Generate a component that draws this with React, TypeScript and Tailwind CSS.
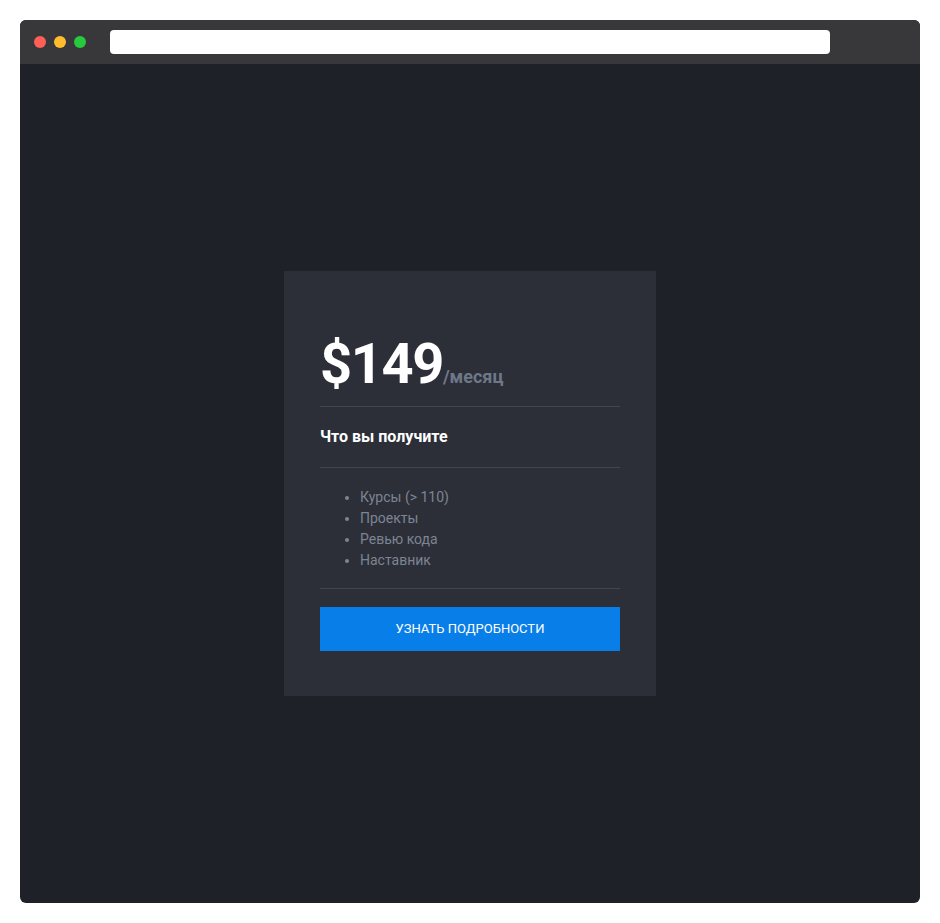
export default function App() {
  const features = ['Курсы (> 110)', 'Проекты', 'Ревью кода', 'Наставник']

  return (
    <div className="min-h-[923px] bg-white p-5 font-['Roboto',sans-serif]">
      <div className="flex h-[883px] flex-col overflow-hidden rounded-md bg-[#1f2129]">
        {/* Browser chrome */}
        <div className="flex h-11 shrink-0 items-center bg-[#38383a] pl-[14px]">
          <div className="flex gap-2">
            <span className="h-3 w-3 rounded-full bg-[#ff5f56]" />
            <span className="h-3 w-3 rounded-full bg-[#ffbd2e]" />
            <span className="h-3 w-3 rounded-full bg-[#27c93f]" />
          </div>
          <div className="ml-6 h-6 w-[720px] rounded bg-white" />
        </div>

        {/* Page */}
        <div className="flex flex-1 items-start justify-center pt-[207px]">
          <div className="w-[372px] bg-[#2c2f38] px-9 pb-[45px] pt-[65px]">
            <div className="flex items-baseline pb-[14px]">
              <span className="text-[56px] font-bold leading-none tracking-tight text-white">$149</span>
              <span className="text-lg font-bold text-[#6f7889]">/месяц</span>
            </div>
            <div className="border-t border-[#41454f] py-5">
              <h3 className="text-base font-bold leading-5 text-white">Что вы получите</h3>
            </div>
            <div className="border-t border-[#41454f] pb-[17px] pt-[19px]">
              <ul className="list-disc pl-10 text-sm leading-[21px] text-[#7d8493]">
                {features.map((item) => (
                  <li key={item}>{item}</li>
                ))}
              </ul>
            </div>
            <div className="border-t border-[#41454f] pt-[18px]">
              <button className="h-11 w-full bg-[#087ee8] text-[13px] uppercase text-white">
                Узнать подробности
              </button>
            </div>
          </div>
        </div>
      </div>
    </div>
  )
}
